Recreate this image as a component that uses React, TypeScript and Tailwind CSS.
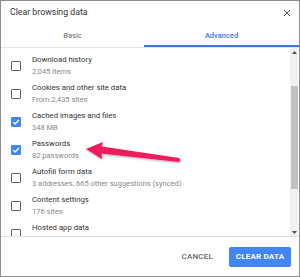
import React from 'react';

type Item = { title: string; sub?: string; checked: boolean };

const items: Item[] = [
  { title: 'Download history', sub: '2,045 items', checked: false },
  { title: 'Cookies and other site data', sub: 'From 2,435 sites', checked: false },
  { title: 'Cached images and files', sub: '348 MB', checked: true },
  { title: 'Passwords', sub: '82 passwords', checked: true },
  { title: 'Autofill form data', sub: '3 addresses, 665 other suggestions (synced)', checked: false },
  { title: 'Content settings', sub: '176 sites', checked: false },
  { title: 'Hosted app data', checked: false },
];

const Checkbox: React.FC<{ checked: boolean }> = ({ checked }) =>
  checked ? (
    <div className="w-[10px] h-[10px] rounded-[1px] bg-[#4285f4] flex items-center justify-center">
      <svg width="8" height="8" viewBox="0 0 8 8">
        <path d="M1.3 4.2 L3.2 6 L6.8 2" stroke="#fff" strokeWidth="1.4" fill="none" />
      </svg>
    </div>
  ) : (
    <div className="w-[10px] h-[10px] rounded-[1px] border-[1.5px] border-[#5f6368]" />
  );

export default function App() {
  return (
    <div
      className="relative w-[300px] h-[277px] bg-white border border-[#8d8d8d] flex flex-col overflow-hidden"
      style={{ fontFamily: 'Roboto, "Liberation Sans", sans-serif' }}
    >
      <div className="h-[23px] flex items-center justify-between pl-[9px] pr-[8px] pt-[1px]">
        <span className="text-[8.75px] text-[#333]">Clear browsing data</span>
        <svg width="8" height="8" viewBox="0 0 8 8">
          <path d="M1 1 L7 7 M7 1 L1 7" stroke="#555" strokeWidth="1" />
        </svg>
      </div>
      <div className="h-[24px] flex border-b border-[#e6e6e6]">
        <div className="w-[143px] flex items-center justify-center text-[7.5px] text-[#666] pt-[1px]">Basic</div>
        <div className="flex-1 flex items-center justify-center text-[7.5px] text-[#3b78e7] font-medium border-b-[2px] border-[#3b78e7] pt-[2px]">
          Advanced
        </div>
      </div>
      <div className="h-[189px] flex border-b border-[#e0e0e0]">
        <div className="flex-1 overflow-hidden pt-[4px]">
          {items.map((it) => (
            <div key={it.title} className="h-[28px] flex items-center pl-[10px]">
              <Checkbox checked={it.checked} />
              <div className="ml-[11px] flex flex-col leading-[12px]">
                <span className="text-[7.75px] text-[#333]">{it.title}</span>
                {it.sub && <span className="text-[7.5px] text-[#888]">{it.sub}</span>}
                {!it.sub && <span className="h-[12px]" />}
              </div>
            </div>
          ))}
        </div>
        <div className="w-[8px] mr-[1px] bg-[#f1f1f1] flex flex-col items-center">
          <div className="h-[8px] flex items-center justify-center">
            <svg width="5" height="3" viewBox="0 0 5 3"><path d="M0 3 L2.5 0 L5 3 Z" fill="#505050" /></svg>
          </div>
          <div className="mt-[30px] w-[7px] h-[103px] bg-[#c1c1c1]" />
          <div className="flex-1" />
          <div className="h-[8px] flex items-center justify-center">
            <svg width="5" height="3" viewBox="0 0 5 3"><path d="M0 0 L2.5 3 L5 0 Z" fill="#505050" /></svg>
          </div>
        </div>
      </div>
      <div className="flex-1 flex items-center justify-end pr-[8px] gap-[16px]">
        <span className="text-[8px] font-medium text-[#666] tracking-[0.2px]">CANCEL</span>
        <div className="w-[62px] h-[20px] rounded-[2px] bg-[#4285f4] flex items-center justify-center text-[8px] font-bold text-white tracking-[0.2px]">
          CLEAR DATA
        </div>
      </div>
      <svg className="absolute left-0 top-0 pointer-events-none" width="300" height="277" viewBox="0 0 300 277">
        <defs>
          <filter id="sh" x="-10%" y="-30%" width="120%" height="160%">
            <feDropShadow dx="0.5" dy="1" stdDeviation="0.8" floodColor="#000" floodOpacity="0.35" />
          </filter>
        </defs>
        <path
          d="M85 148 L102 141 L100.5 145.5 L178 157 Q180 159 178 161 L100.5 152.5 L101 158 Z"
          fill="#ef1b5d"
          filter="url(#sh)"
        />
      </svg>
    </div>
  );
}
